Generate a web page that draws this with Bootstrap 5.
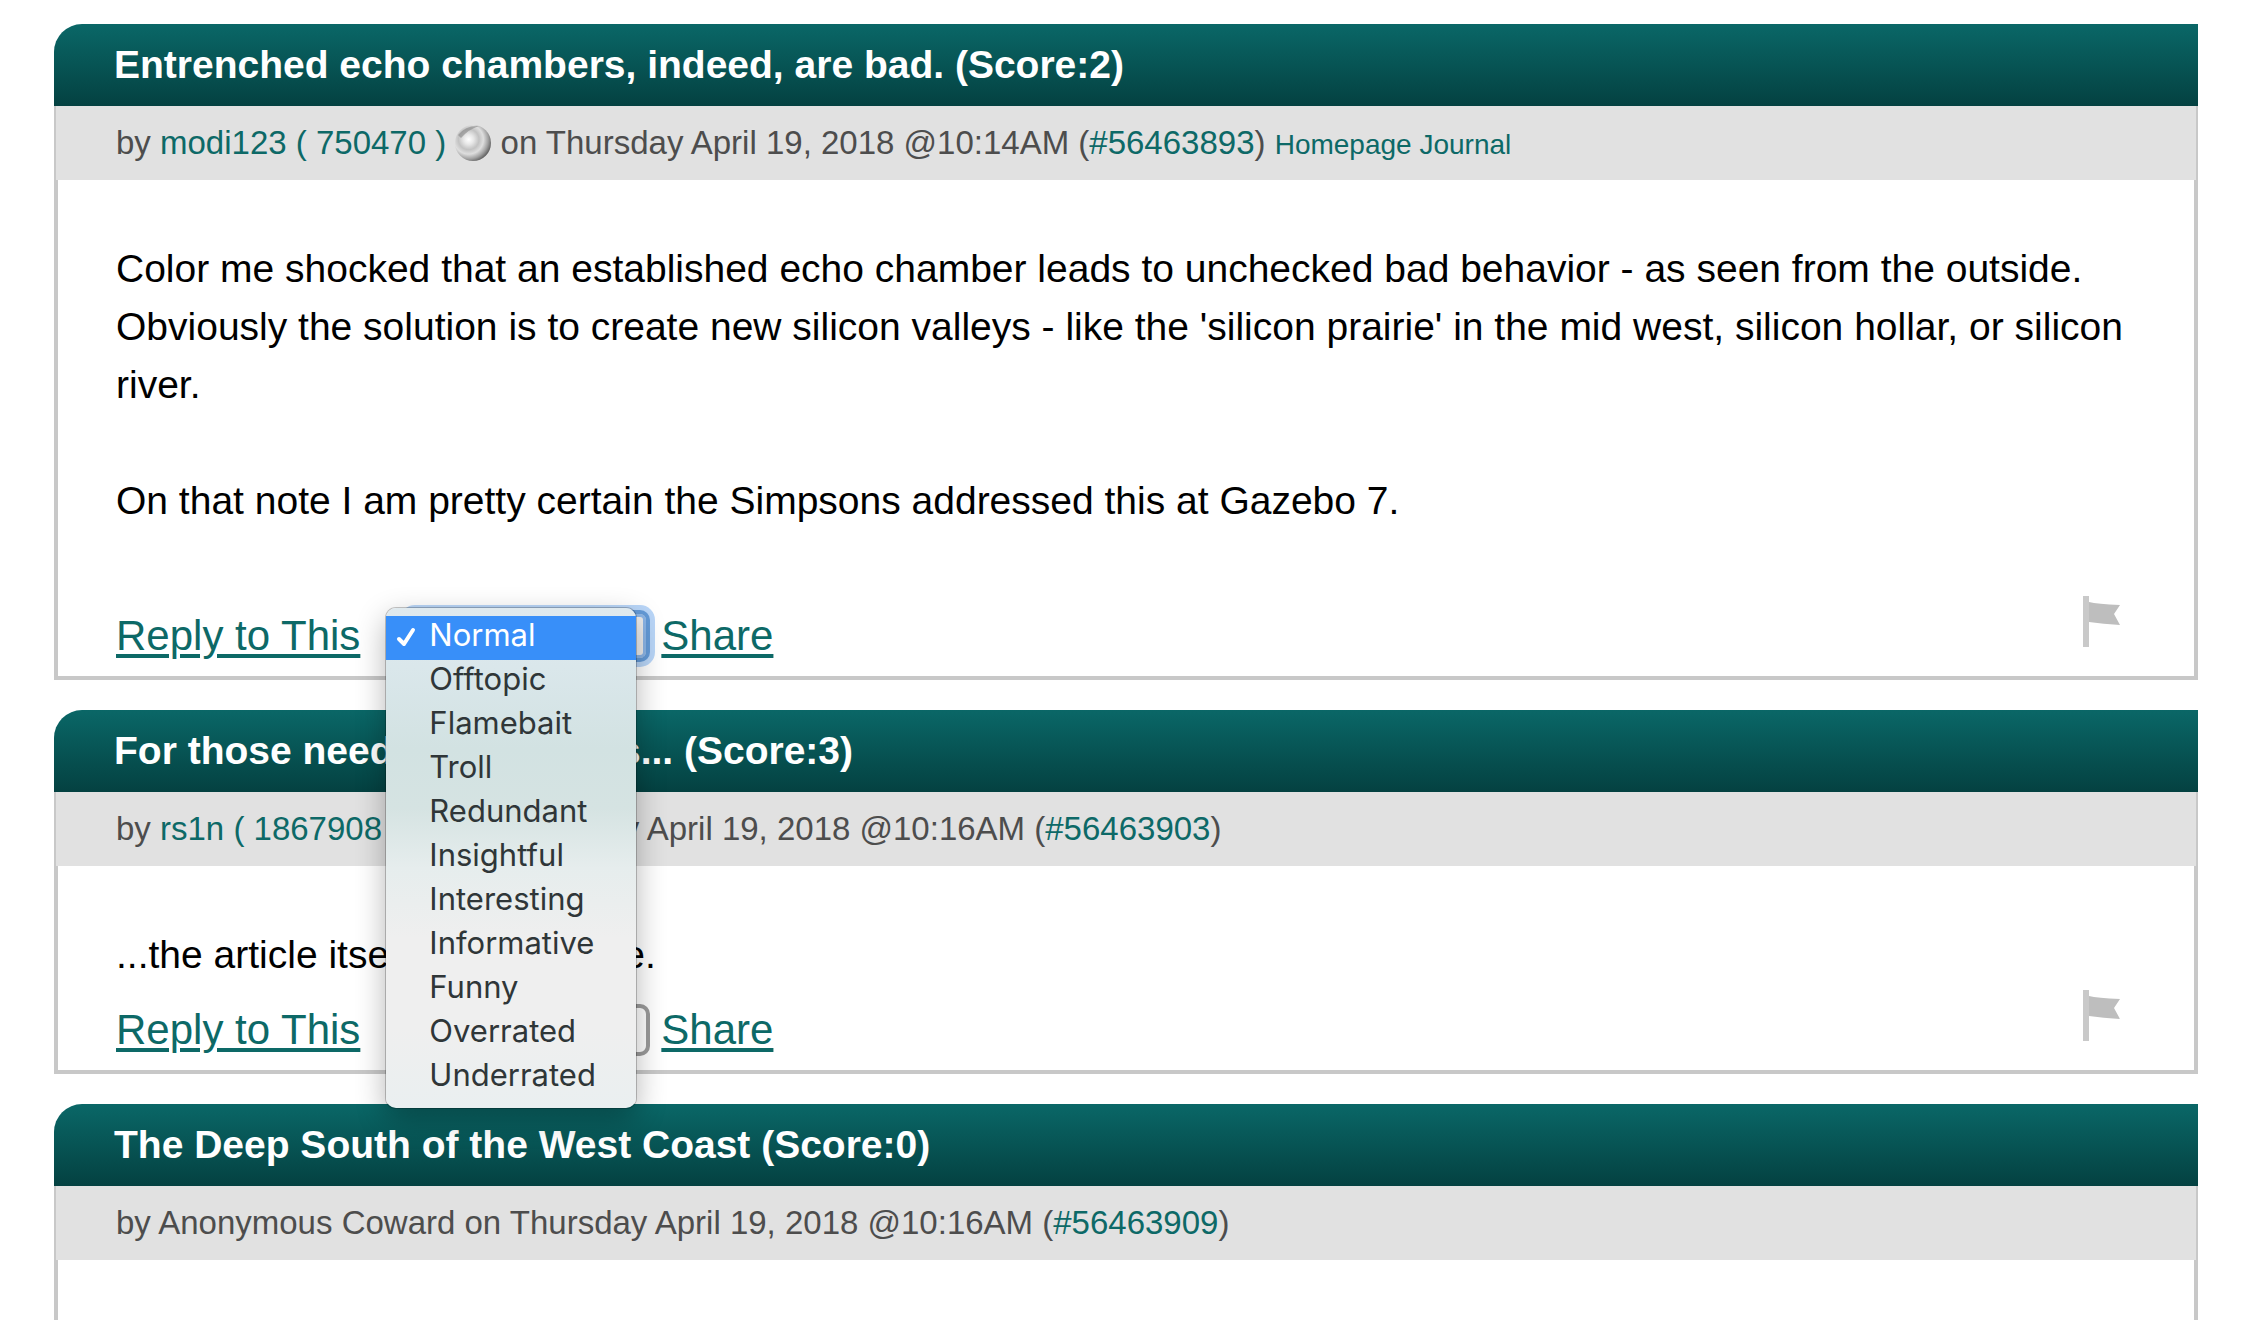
<!DOCTYPE html>
<html lang="en">
<head>
<meta charset="utf-8">
<meta name="viewport" content="width=device-width, initial-scale=1">
<title>Comments</title>
<link href="https://cdn.jsdelivr.net/npm/bootstrap@5.3.0/dist/css/bootstrap.min.css" rel="stylesheet">
<style>
  body { font-family: "Liberation Sans", Arial, sans-serif; background: #fff; color: #000; font-size: 39px; line-height: 58px; overflow-x: hidden; }
  a { color: #0d6967; text-decoration: none; }
  .thread { padding: 24px 54px 0; gap: 30px; }
  .comment-title { padding: 0 60px; font-size: 39px; line-height: 82px; font-weight: 700; color: #fff; background: linear-gradient(#0a6767, #044141); border-top-left-radius: 28px; }
  .byline { padding: 0 60px; font-size: 33px; line-height: 74px; color: #4d4d4d; background: #e1e1e1; border: solid #c8c8c8; border-width: 0 2px; }
  .byline svg { vertical-align: middle; margin: -8px 0 -4px; }
  .byline-extra { font-size: 28px; line-height: 28px; }
  .comment-body { padding: 60px 58px 14px; border: 4px solid #c8c8c8; border-top: 0; }
  .comment-body p { margin-bottom: 58px; }
  .comment-body p:last-of-type { margin-bottom: 4px; }
  .comment-body.roomy p:last-of-type { margin-bottom: 64px; }
  .comment-body.unfinished { min-height: 60px; padding: 0; border-bottom: 0; }
  .action-link { font-size: 42px; line-height: 52px; text-decoration: underline; text-decoration-thickness: 4px; text-underline-offset: 4px; }
  .picker { margin: 0 11px 0 45px; }
  .mod-select { display: block; width: 245px; height: 52px; padding: 0 12px; font-size: 30px; background: #fff; border: 4px solid #9b9b9b; border-radius: 10px; appearance: none; color: #333; }
  .mod-select.is-open { background: #eee; border-color: #649bd8; outline: 0; box-shadow: 0 0 0 5px #b9d6f8, inset 0 0 0 3px #8cb6e8; }
  .mod-menu { top: -2px; left: -19px; width: 250px; padding: 8px 0; z-index: 10; font-family: Inter, "Liberation Sans", sans-serif; font-size: 31px; color: #2f3638; border-radius: 10px;
    background: linear-gradient(#dfe9ee 0, #dae7eb 60px, #d2e2e2 140px, #d5e3e2 200px, #e6eded 260px, #efefef 330px, #efefef 420px, #eaeff0 100%);
    box-shadow: 0 0 0 1px rgba(0,0,0,.22), 0 10px 30px rgba(0,0,0,.3); }
  .mod-menu button { display: block; width: 100%; line-height: 38px; padding: 0 0 6px 43px; border: 0; background: none; color: inherit; text-align: left; }
  .mod-menu button.chosen { position: relative; background: #388ff9; color: #fff; }
  .chosen svg { position: absolute; left: 10px; top: 11px; }
  .flag-btn { padding: 0; border: 0; background: none; margin: 0 15px 14px 0; line-height: 0; }
</style>
</head>
<body>
<svg class="position-absolute" width="0" height="0" aria-hidden="true">
  <defs>
    <radialGradient id="ball" cx=".38" cy=".4" r=".68"><stop offset="0" stop-color="#fff"/><stop offset=".2" stop-color="#e8e8e8"/><stop offset=".42" stop-color="#c2c2c2"/><stop offset=".6" stop-color="#dedede"/><stop offset=".8" stop-color="#a0a0a0"/><stop offset="1" stop-color="#4c4c4c"/></radialGradient>
    <symbol id="relation" viewBox="0 0 36 36"><circle cx="18" cy="18" r="18" fill="url(#ball)"/><path d="M3 10Q11 0 24 1Q14 4 6 13Z" fill="#858585" opacity=".6"/></symbol>
    <symbol id="flag" viewBox="0 0 38 54"><path d="M0 2H6V53H0Z" fill="#c9c9c9"/><path d="M6 8Q14 10 37 11L31 20L37 31Q20 30 6 28Z" fill="#bebebe"/></symbol>
  </defs>
</svg>
<main class="thread d-flex flex-column">

  <article>
    <h2 class="comment-title m-0">Entrenched echo chambers, indeed, are bad. (Score:2)</h2>
    <div class="byline">by <a href="#">modi123 ( 750470 )</a>
      <svg width="36" height="36" aria-hidden="true"><use href="#relation"/></svg>
      on Thursday April 19, 2018 @10:14AM (<a href="#">#56463893</a>) <span class="byline-extra"><a href="#">Homepage</a> <a href="#">Journal</a></span></div>
    <div class="comment-body roomy">
      <p>Color me shocked that an established echo chamber leads to unchecked bad behavior - as seen from the outside. Obviously the solution is to create new silicon valleys - like the 'silicon prairie' in the mid west, silicon hollar, or silicon river.</p>
      <p>On that note I am pretty certain the Simpsons addressed this at Gazebo 7.</p>
      <div class="d-flex align-items-end">
        <a class="action-link" href="#">Reply to This</a>
        <div class="picker position-relative">
          <select class="mod-select is-open" aria-label="Moderate"><option>Normal</option></select>
          <div class="mod-menu position-absolute" role="listbox" aria-label="Moderation">
            <button type="button" role="option" aria-selected="true" class="chosen"><svg width="20" height="20" viewBox="0 0 20 20" fill="none" stroke="#fff" stroke-width="4" stroke-linecap="round" stroke-linejoin="round" aria-hidden="true"><path d="M3 12L8 17L17 3"/></svg>Normal</button>
            <button type="button" role="option">Offtopic</button>
            <button type="button" role="option">Flamebait</button>
            <button type="button" role="option">Troll</button>
            <button type="button" role="option">Redundant</button>
            <button type="button" role="option">Insightful</button>
            <button type="button" role="option">Interesting</button>
            <button type="button" role="option">Informative</button>
            <button type="button" role="option">Funny</button>
            <button type="button" role="option">Overrated</button>
            <button type="button" role="option">Underrated</button>
          </div>
        </div>
        <a class="action-link" href="#">Share</a>
        <button type="button" class="flag-btn ms-auto" aria-label="Flag comment"><svg width="38" height="54" aria-hidden="true"><use href="#flag"/></svg></button>
      </div>
    </div>
  </article>

  <article>
    <h2 class="comment-title m-0">For those needing examples... (Score:3)</h2>
    <div class="byline">by <a href="#">rs1n ( 1867908 )</a>
      <svg width="36" height="36" aria-hidden="true"><use href="#relation"/></svg>
      on Thursday April 19, 2018 @10:16AM (<a href="#">#56463903</a>)</div>
    <div class="comment-body">
      <p>...the article itself is found here.</p>
      <div class="d-flex align-items-end">
        <a class="action-link" href="#">Reply to This</a>
        <div class="picker">
          <select class="mod-select" aria-label="Moderate"><option>Normal</option></select>
        </div>
        <a class="action-link" href="#">Share</a>
        <button type="button" class="flag-btn ms-auto" aria-label="Flag comment"><svg width="38" height="54" aria-hidden="true"><use href="#flag"/></svg></button>
      </div>
    </div>
  </article>

  <article>
    <h2 class="comment-title m-0">The Deep South of the West Coast (Score:0)</h2>
    <div class="byline">by Anonymous Coward on Thursday April 19, 2018 @10:16AM (<a href="#">#56463909</a>)</div>
    <div class="comment-body unfinished"></div>
  </article>

</main>
<script src="https://cdn.jsdelivr.net/npm/bootstrap@5.3.0/dist/js/bootstrap.bundle.min.js"></script>
</body>
</html>
